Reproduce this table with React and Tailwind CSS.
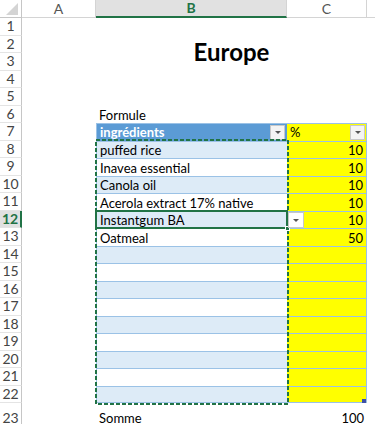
import React from 'react';

const data = {
  6: { b: 'Formule' },
  8: { b: 'puffed rice', c: '10' },
  9: { b: 'Inavea essential', c: '10' },
  10: { b: 'Canola oil', c: '10' },
  11: { b: 'Acerola extract 17% native', c: '10' },
  12: { b: 'Instantgum BA', c: '10' },
  13: { b: 'Oatmeal', c: '50' },
  23: { b: 'Somme', c: '100' },
};

function DropBtn() {
  return (
    <div className="w-[15px] h-[15px] shrink-0 bg-[#f4f4f4] border border-[#c8c8c8] flex items-center justify-center">
      <div className="w-0 h-0 border-l-[3px] border-r-[3px] border-t-[3px] border-l-transparent border-r-transparent border-t-[#555]" />
    </div>
  );
}

function ColHeader({ label, w, active }) {
  return (
    <div
      className={`${w} h-full flex items-center justify-center text-[14px] border-r border-[#d4d4d4] ${
        active ? 'bg-[#e1e1e1] text-[#217346] font-bold border-b-2 border-b-[#217346]' : 'bg-white text-[#555] border-b border-b-[#d4d4d4]'
      }`}
    >
      {label}
    </div>
  );
}

function Row({ n }) {
  const d = data[n] || {};
  const inTable = n >= 7 && n <= 22;
  const band = n >= 8 && n <= 22 && n % 2 === 0;
  const isActive = n === 12;
  const last = n === 23;
  const align = last ? 'items-center' : 'items-end pb-[1px]';

  return (
    <div className={`flex ${last ? 'h-[30px]' : 'h-[17.5px]'}`}>
      <div
        className={`w-[22px] shrink-0 flex items-center justify-center text-[14px] border-b border-[#e4e4e4] ${
          isActive ? 'bg-[#e1e1e1] text-[#217346] font-bold border-r-2 border-r-[#217346]' : 'text-[#444] border-r border-r-[#c6c6c6]'
        }`}
      >
        {n}
      </div>
      <div className="w-[74px] shrink-0" />
      {n === 7 ? (
        <div className="w-[191px] shrink-0 bg-[#5b9bd5] border-t border-l border-[#9bc2e6] flex items-center justify-between pl-[3px] pr-[2px]">
          <span className="text-white font-bold">ingrédients</span>
          <DropBtn />
        </div>
      ) : (
        <div
          className={`w-[191px] shrink-0 flex ${align} pl-[3px] whitespace-nowrap text-black ${
            inTable ? 'border-t border-l border-[#9bc2e6]' : ''
          } ${n === 22 ? 'border-b' : ''} ${band ? 'bg-[#ddebf7]' : 'bg-white'}`}
        >
          {d.b}
        </div>
      )}
      {n === 7 ? (
        <div className="w-[80px] shrink-0 bg-[#ffff00] border-t border-r border-[#9bc2e6] flex items-center justify-between pl-[3px] pr-[1px]">
          <span className="text-black">%</span>
          <DropBtn />
        </div>
      ) : (
        <div
          className={`w-[80px] shrink-0 flex ${align} justify-end pr-[3px] text-black ${
            inTable ? 'bg-[#ffff00] border-t border-r border-[#9bc2e6]' : ''
          } ${n === 22 ? 'border-b' : ''}`}
        >
          {d.c}
        </div>
      )}
      <div className="flex-1" />
    </div>
  );
}

export default function App() {
  const rows = Array.from({ length: 23 }, (_, i) => i + 1);

  return (
    <div
      className="relative w-[375px] h-[424px] overflow-hidden bg-white text-[13px] leading-none"
      style={{ fontFamily: 'Lato, "Open Sans", sans-serif' }}
    >
      {/* Column headers */}
      <div className="flex h-[18px]">
        <div className="w-[22px] shrink-0 flex items-end justify-end pr-[3px] pb-[2px] border-r border-b border-[#c6c6c6] bg-white">
          <svg width="12" height="12" viewBox="0 0 12 12">
            <polygon points="12,0 12,12 0,12" fill="#d4d4d4" />
          </svg>
        </div>
        <ColHeader label="A" w="w-[74px] shrink-0" />
        <ColHeader label="B" w="w-[191px] shrink-0" active />
        <ColHeader label="C" w="w-[80px] shrink-0" />
        <div className="flex-1 border-b border-[#d4d4d4]" />
      </div>

      {rows.map((n) => (
        <Row key={n} n={n} />
      ))}

      {/* Title */}
      <div className="absolute left-[96px] w-[271px] top-[40px] text-center font-bold text-[24px] text-black">
        Europe
      </div>

      {/* Copy selection marching ants */}
      <svg className="absolute left-[95px] top-[139px]" width="194" height="266">
        <rect x="1" y="1" width="192" height="264" fill="none" stroke="#217346" strokeWidth="2" strokeDasharray="4 2" />
      </svg>

      {/* Active cell */}
      <div className="absolute left-[95px] top-[209.5px] w-[193px] h-[19.5px] border-2 border-[#217346]" />
      <div className="absolute left-[285px] top-[226px] w-[5px] h-[5px] bg-[#217346] border border-white" />

      {/* Validation dropdown */}
      <div className="absolute left-[288px] top-[212px] w-[16px] h-[16px] bg-white border border-[#c8c8c8] flex items-center justify-center">
        <div className="w-0 h-0 border-l-[3px] border-r-[3px] border-t-[3px] border-l-transparent border-r-transparent border-t-[#555]" />
      </div>

      {/* Table resize handle */}
      <div className="absolute left-[362px] top-[399px] w-[4px] h-[4px] bg-[#3f51a5]" />
    </div>
  );
}
